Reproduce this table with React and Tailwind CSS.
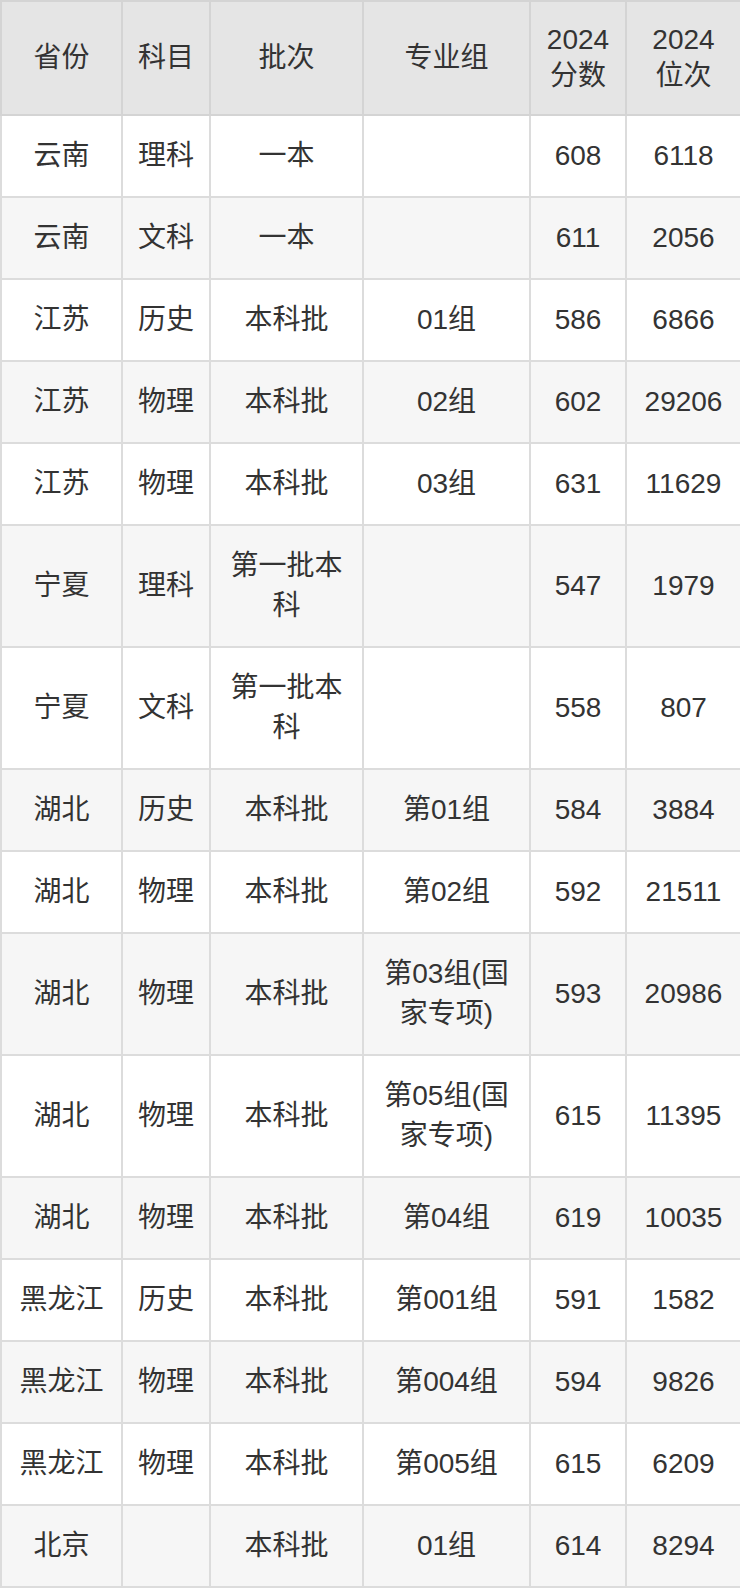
const rows = [
  ['云南', '理科', '一本', '', '608', '6118'],
  ['云南', '文科', '一本', '', '611', '2056'],
  ['江苏', '历史', '本科批', '01组', '586', '6866'],
  ['江苏', '物理', '本科批', '02组', '602', '29206'],
  ['江苏', '物理', '本科批', '03组', '631', '11629'],
  ['宁夏', '理科', '第一批本科', '', '547', '1979'],
  ['宁夏', '文科', '第一批本科', '', '558', '807'],
  ['湖北', '历史', '本科批', '第01组', '584', '3884'],
  ['湖北', '物理', '本科批', '第02组', '592', '21511'],
  ['湖北', '物理', '本科批', '第03组(国家专项)', '593', '20986'],
  ['湖北', '物理', '本科批', '第05组(国家专项)', '615', '11395'],
  ['湖北', '物理', '本科批', '第04组', '619', '10035'],
  ['黑龙江', '历史', '本科批', '第001组', '591', '1582'],
  ['黑龙江', '物理', '本科批', '第004组', '594', '9826'],
  ['黑龙江', '物理', '本科批', '第005组', '615', '6209'],
  ['北京', '', '本科批', '01组', '614', '8294'],
]

const headers = ['省份', '科目', '批次', '专业组', '2024分数', '2024位次']
const widths = [121, 88, 153, 167, 96, 115]

export default function App() {
  return (
    <div className="w-[740px] bg-white text-[#333] text-[28px]" style={{ fontFamily: '"Liberation Sans", "Noto Sans CJK SC", sans-serif' }}>
      <table className="w-[740px] table-fixed border-collapse">
        <colgroup>
          {widths.map((w, i) => <col key={i} style={{ width: w }} />)}
        </colgroup>
        <thead>
          <tr className="bg-[#e5e5e5]">
            {headers.map((h) => (
              <th key={h} className="border-2 border-[#d4d4d4] px-[14px] py-[20px] font-normal leading-[36px] text-center align-middle">{h}</th>
            ))}
          </tr>
        </thead>
        <tbody>
          {rows.map((r, i) => (
            <tr key={i} className={i % 2 === 1 ? 'bg-[#f6f6f6]' : 'bg-white'}>
              {r.map((c, j) => (
                <td key={j} className="border-2 border-[#dcdcdc] px-[14px] py-[20px] leading-[40px] text-center align-middle">{c}</td>
              ))}
            </tr>
          ))}
        </tbody>
      </table>
    </div>
  )
}
